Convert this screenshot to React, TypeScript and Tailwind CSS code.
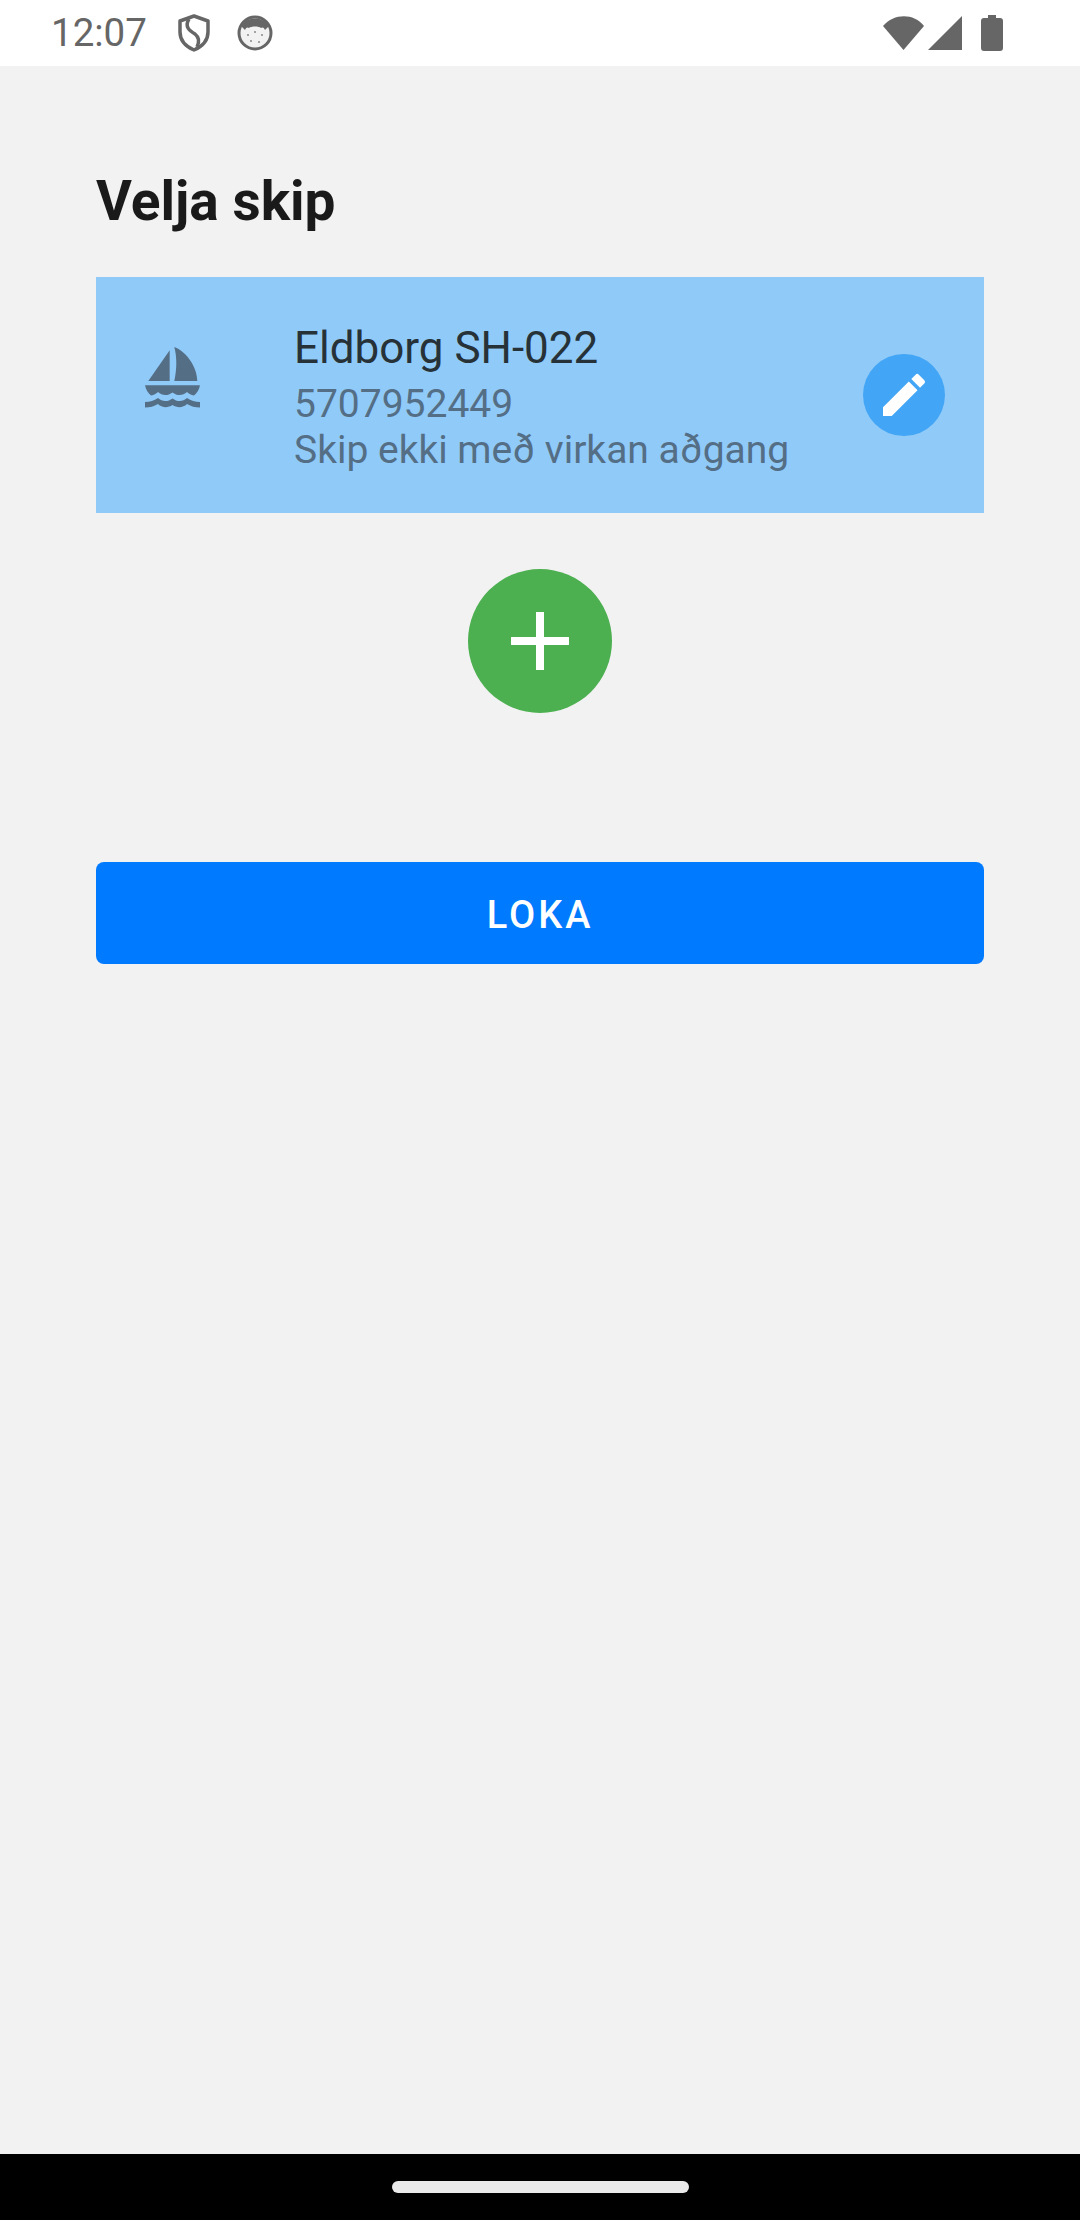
import { MdEdit } from "react-icons/md";

export default function App() {
  return (
    <div className="w-[1080px] h-[2220px] flex flex-col bg-[#f2f2f2] overflow-hidden font-['Roboto',sans-serif]">
      <div className="h-[66px] bg-white flex items-center justify-between shrink-0 pl-[51px] pr-[77px] text-[#666666]">
        <div className="flex items-center">
          <span className="text-[38.5px] leading-none w-[117px]">12:07</span>
          <svg className="ml-[10px]" width="32" height="38" viewBox="0 0 32 38" fill="none">
            <path d="M16 2 L30 7 V18 C30 27 23 33 16 36 C9 33 2 27 2 18 V7 Z" stroke="#666" strokeWidth="3.5" strokeLinejoin="round" />
            <path d="M11 5 C6 13 12 17 17 20 C22 24 21 29 19 33" stroke="#666" strokeWidth="3.5" />
          </svg>
          <svg className="ml-[27px]" width="36" height="36" viewBox="0 0 36 36">
            <circle cx="18" cy="18" r="16" fill="#f2f2f2" stroke="#666" strokeWidth="3" />
            <path d="M4 11 C9 1 27 1 32 11 L28 15 C27 12 25 12 24 13 C22 11 14 11 12 13 C11 12 9 12 8 15 Z" fill="#666" />
            <circle cx="11" cy="20" r="1" fill="#888" />
            <circle cx="18" cy="17" r="1" fill="#888" />
            <circle cx="25" cy="20" r="1" fill="#888" />
            <circle cx="14" cy="26" r="1" fill="#888" />
            <circle cx="22" cy="27" r="1" fill="#888" />
          </svg>
        </div>
        <div className="flex items-center">
          <svg width="42" height="36" viewBox="0 0 42 36"><path d="M0 11 C11 -2 31 -2 41 11 L20.5 35 Z" fill="#666" /></svg>
          <svg className="ml-[3px]" width="35" height="34" viewBox="0 0 35 34"><path d="M34 0 V34 H0 Z" fill="#666" /></svg>
          <svg className="ml-[18px]" width="22" height="36" viewBox="0 0 22 36"><path d="M7 0 H15 V3 H19 Q22 3 22 6 V33 Q22 36 19 36 H3 Q0 36 0 33 V6 Q0 3 3 3 H7 Z" fill="#666" /></svg>
        </div>
      </div>

      <div className="flex-1 flex flex-col px-[96px]">
        <h1 className="mt-[106px] text-[55px] leading-[59px] font-bold text-[#1a1a1a]">Velja skip</h1>

        <div className="mt-[46px] h-[236px] bg-[#90caf9] flex items-center">
          <div className="w-[198px] pl-[49px] shrink-0 flex">
            <svg className="-mt-[36px]" width="55" height="61" viewBox="0 0 55 61" fill="#546e85">
              <path d="M24.7 3.3 L3.3 34 H24.7 Z" />
              <path d="M29.3 0 C42 5 52 20 52.3 34 H29.3 C32 22 32 10 29.3 0 Z" />
              <path d="M0 38.3 H55 C54 43 52 46 49 48.5 C46 48 44 47 42 45 C38 49 32 49 27.5 45.5 C23 49 17 49 13 45 C11 47 9 48 6 48.5 C3 46 1 43 0 38.3 Z" />
              <path d="M0 55 C5 55 9 53.5 13 51 C17 55 23 55 27.5 51.5 C32 55 38 55 42 51 C46 53.5 50 55 55 55 V60.5 C50 60.5 46 59.5 42 57 C38 61 32 61 27.5 58 C23 61 17 61 13 57 C9 59.5 5 60.5 0 60.5 Z" />
            </svg>
          </div>
          <div className="flex-1 min-w-0 text-[#546e85] mt-[6px]">
            <div className="text-[44px] leading-[50px] text-[#263238]">Eldborg SH-022</div>
            <div className="mt-[8px] text-[39px] leading-[46px]">5707952449</div>
            <div className="text-[39px] leading-[46px]">Skip ekki með virkan aðgang</div>
          </div>
          <div className="w-[82px] h-[82px] rounded-full bg-[#42a5f5] flex items-center justify-center mr-[39px] shrink-0">
            <MdEdit size={56} className="text-white" />
          </div>
        </div>

        <div className="mt-[56px] w-[144px] h-[144px] self-center rounded-full bg-[#4caf50] flex items-center justify-center">
          <svg width="58" height="58" viewBox="0 0 58 58"><path d="M25 0 H33 V25 H58 V33 H33 V58 H25 V33 H0 V25 H25 Z" fill="#fff" /></svg>
        </div>

        <button className="mt-[149px] h-[102px] w-full rounded-[8px] bg-[#007aff] text-white text-[38px] font-medium tracking-[3px] pt-[5px] flex items-center justify-center">LOKA</button>
      </div>

      <div className="h-[66px] bg-black shrink-0 flex items-center justify-center">
        <div className="w-[297px] h-[12px] rounded-full bg-[#eaeaea]" />
      </div>
    </div>
  );
}
